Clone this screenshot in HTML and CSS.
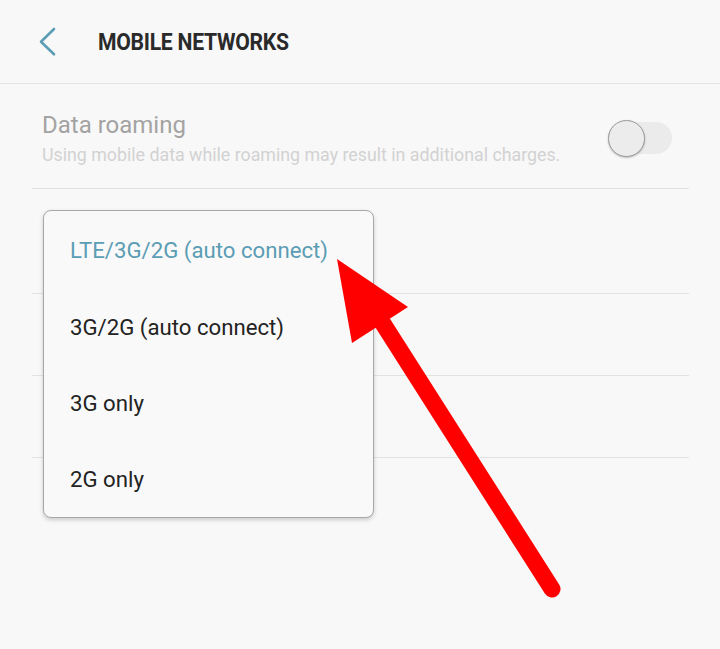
FILE: index.html
```html
<!DOCTYPE html>
<html>
<head>
<meta charset="utf-8">
<link rel="stylesheet" href="styles.css">
</head>
<body>
<div class="screen">
  <header class="appbar">
    <svg class="back" width="20" height="30" viewBox="0 0 20 30"><polyline points="16,2 3,14.7 16,27.3" fill="none" stroke="#5b9db4" stroke-width="2.6" stroke-linecap="round" stroke-linejoin="round"/></svg>
    <h1 class="title">MOBILE NETWORKS</h1>
  </header>
  <div class="content">
    <div class="row roaming">
      <div class="texts">
        <div class="row-title">Data roaming</div>
        <div class="row-sub">Using mobile data while roaming may result in additional charges.</div>
      </div>
      <div class="switch"><div class="knob"></div></div>
    </div>
    <div class="row plain"></div>
    <div class="row plain short"></div>
    <div class="row plain short"></div>
  </div>

  <div class="menu">
    <div class="item selected">LTE/3G/2G (auto connect)</div>
    <div class="item">3G/2G (auto connect)</div>
    <div class="item">3G only</div>
    <div class="item">2G only</div>
  </div>

  <svg class="arrow" width="720" height="649" viewBox="0 0 720 649">
    <line x1="382" y1="322" x2="552" y2="589" stroke="#ff0000" stroke-width="17" stroke-linecap="round"/>
    <polygon points="337,259 352,343 408,307" fill="#ff0000"/>
  </svg>
</div>
</body>
</html>
```

FILE: styles.css
```css
html, body {
  margin: 0;
  padding: 0;
  background: #f8f8f8;
}
.screen {
  position: relative;
  width: 720px;
  height: 649px;
  overflow: hidden;
  font-family: Roboto, "Noto Sans", sans-serif;
  background: #f8f8f8;
}
.appbar {
  height: 84px;
  box-sizing: border-box;
  border-bottom: 1px solid #e4e4e4;
  display: flex;
  align-items: center;
  padding-left: 38px;
}
.back {
  display: block;
  margin-top: 1px;
}
.title {
  margin: 2px 0 0 40px;
  font-size: 23px;
  font-weight: 700;
  color: #2a2a2a;
  letter-spacing: -0.3px;
  transform: scaleX(0.92);
  transform-origin: left center;
}
.content {
  padding: 0 31px 0 32px;
}
.row {
  border-bottom: 1px solid #e2e2e2;
  box-sizing: border-box;
}
.roaming {
  height: 105px;
  display: flex;
  align-items: center;
  justify-content: space-between;
  padding: 0 17px 0 10px;
}
.texts {
  padding-top: 4px;
}
.row-title {
  font-size: 24px;
  color: #a3a3a3;
  line-height: 28px;
}
.row-sub {
  font-size: 17.8px;
  color: #d2d2d2;
  line-height: 22px;
  margin-top: 5px;
}
.plain {
  height: 105px;
}
.short {
  height: 82px;
}
.switch {
  position: relative;
  width: 64px;
  height: 32px;
  border-radius: 16px;
  background: #ebebeb;
  margin-top: 3px;
}
.knob {
  position: absolute;
  left: 0;
  top: -2px;
  width: 37px;
  height: 37px;
  box-sizing: border-box;
  border-radius: 50%;
  background: #ececec;
  border: 1px solid #9a9a9a;
  box-shadow: 0 1px 2px rgba(0,0,0,0.25);
}
.menu {
  position: absolute;
  left: 43px;
  top: 210px;
  width: 331px;
  height: 308px;
  box-sizing: border-box;
  background: #f9f9f9;
  border: 1px solid #a8a8a8;
  border-radius: 8px;
  box-shadow: 0 2px 4px rgba(0,0,0,0.18);
  display: flex;
  flex-direction: column;
}
.item {
  height: 77.5px;
  display: flex;
  align-items: center;
  padding-left: 26px;
  font-size: 22.2px;
  color: #232323;
}
.item:first-child {
  height: 79px;
}
.selected {
  color: #5b9db4;
}
.arrow {
  position: absolute;
  left: 0;
  top: 0;
  pointer-events: none;
}
```
